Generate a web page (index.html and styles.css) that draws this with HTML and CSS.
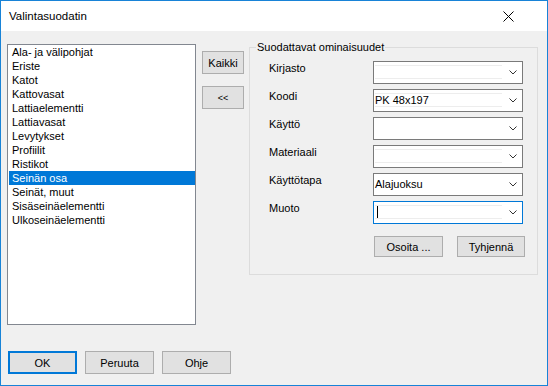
FILE: index.html
```html
<!DOCTYPE html>
<html lang="fi">
<head>
    <meta charset="UTF-8">
    <meta name="viewport" content="width=device-width, initial-scale=1.0">
    <title>Valintasuodatin</title>
    <link rel="stylesheet" href="styles.css">
</head>
<body>
    <div class="window">
        <div class="titlebar">
            <span class="title">Valintasuodatin</span>
            <span class="close">
                <svg width="11" height="11" viewBox="0 0 11 11"><path d="M0.5 0.5 L10.5 10.5 M10.5 0.5 L0.5 10.5" stroke="#000" stroke-width="1" fill="none"/></svg>
            </span>
        </div>
        <div class="client">
            <div class="main">
                <ul class="list">
                    <li>Ala- ja välipohjat</li>
                    <li>Eriste</li>
                    <li>Katot</li>
                    <li>Kattovasat</li>
                    <li>Lattiaelementti</li>
                    <li>Lattiavasat</li>
                    <li>Levytykset</li>
                    <li>Profiilit</li>
                    <li>Ristikot</li>
                    <li class="selected">Seinän osa</li>
                    <li>Seinät, muut</li>
                    <li>Sisäseinäelementti</li>
                    <li>Ulkoseinäelementti</li>
                </ul>
                <div class="side">
                    <button class="btn">Kaikki</button>
                    <button class="btn back">&lt;&lt;</button>
                </div>
                <fieldset class="group">
                    <legend>Suodattavat ominaisuudet</legend>
                    <div class="fields">
                        <div class="row">
                            <label>Kirjasto</label>
                            <div class="combo"><span class="field lined"></span><span class="arrow"><svg width="8" height="5" viewBox="0 0 8 5"><polyline points="0.5,0.5 4,4 7.5,0.5" fill="none" stroke="#333" stroke-width="1"/></svg></span></div>
                        </div>
                        <div class="row">
                            <label>Koodi</label>
                            <div class="combo"><span class="field lined">PK 48x197</span><span class="arrow"><svg width="8" height="5" viewBox="0 0 8 5"><polyline points="0.5,0.5 4,4 7.5,0.5" fill="none" stroke="#333" stroke-width="1"/></svg></span></div>
                        </div>
                        <div class="row">
                            <label>Käyttö</label>
                            <div class="combo"><span class="field"></span><span class="arrow"><svg width="8" height="5" viewBox="0 0 8 5"><polyline points="0.5,0.5 4,4 7.5,0.5" fill="none" stroke="#333" stroke-width="1"/></svg></span></div>
                        </div>
                        <div class="row">
                            <label>Materiaali</label>
                            <div class="combo"><span class="field lined"></span><span class="arrow"><svg width="8" height="5" viewBox="0 0 8 5"><polyline points="0.5,0.5 4,4 7.5,0.5" fill="none" stroke="#333" stroke-width="1"/></svg></span></div>
                        </div>
                        <div class="row">
                            <label>Käyttötapa</label>
                            <div class="combo"><span class="field">Alajuoksu</span><span class="arrow"><svg width="8" height="5" viewBox="0 0 8 5"><polyline points="0.5,0.5 4,4 7.5,0.5" fill="none" stroke="#333" stroke-width="1"/></svg></span></div>
                        </div>
                        <div class="row">
                            <label>Muoto</label>
                            <div class="combo focused"><span class="field lined"><span class="caret"></span></span><span class="arrow"><svg width="8" height="5" viewBox="0 0 8 5"><polyline points="0.5,0.5 4,4 7.5,0.5" fill="none" stroke="#333" stroke-width="1"/></svg></span></div>
                        </div>
                        <div class="actions">
                            <button class="btn small">Osoita ...</button>
                            <button class="btn small">Tyhjennä</button>
                        </div>
                    </div>
                </fieldset>
            </div>
            <div class="footer">
                <button class="btn wide default">OK</button>
                <button class="btn wide">Peruuta</button>
                <button class="btn wide">Ohje</button>
            </div>
        </div>
    </div>
</body>
</html>
```

FILE: styles.css
```css
* {
    box-sizing: border-box;
}
body {
    margin: 0;
    font-family: 'Liberation Sans', Arial, sans-serif;
    font-size: 11px;
    color: #000;
}
.window {
    width: 548px;
    height: 386px;
    border: 1px solid #1883d7; /* accent border */
    background-color: #f0f0f0;
    display: flex;
    flex-direction: column;
}
.titlebar {
    height: 30px;
    background-color: #fff;
    display: flex;
    align-items: center;
    justify-content: space-between;
    padding-left: 8px;
    font-size: 11.5px;
}
.close {
    display: flex;
    padding-right: 33px;
}
.client {
    flex: 1;
    display: flex;
    flex-direction: column;
    padding: 13px 0 0 6px;
}
.main {
    display: flex;
    align-items: flex-start;
}
.list {
    width: 189px;
    height: 281px;
    margin: 0;
    padding: 0 0 0 1px;
    list-style: none;
    background-color: #fff;
    border: 1px solid #828790;
}
.list li {
    height: 14px;
    line-height: 14px;
    padding-left: 3px;
    white-space: nowrap;
}
.list li.selected {
    background-color: #0078d7;
    color: #fff;
}
.btn {
    font: inherit;
    color: #000;
    background-color: #e1e1e1;
    border: 1px solid #adadad;
    padding: 0;
    height: 23px;
}
.side {
    display: flex;
    flex-direction: column;
    gap: 12px;
    margin-left: 6px;
    padding-top: 7px;
}
.side .btn {
    width: 42px;
}
.side .back {
    font-size: 9px;
    padding-top: 1px;
}
.group {
    width: 289px;
    height: 234px;
    margin: -3px 0 0 5px;
    padding: 0;
    border: 1px solid #dcdcdc;
}
.group legend {
    margin-left: 6px;
    padding: 0 1px;
    line-height: 13px;
}
.fields {
    display: flex;
    flex-direction: column;
    gap: 5px;
    padding: 7px 0 0 19px;
}
.row {
    display: flex;
    height: 23px;
}
.row label {
    width: 104px;
    padding-top: 1px;
    line-height: 13px;
}
.combo {
    width: 150px;
    height: 23px;
    display: flex;
    background-color: #fff;
    border: 1px solid #7a7a7a;
}
.combo.focused {
    border-color: #0078d7;
}
.field {
    width: 127px;
    margin: 3px 0 4px 1px;
    border-top: 1px solid transparent;
    border-bottom: 1px solid transparent;
    line-height: 12px;
    white-space: nowrap;
}
.field.lined {
    border-color: #ededed;
}
.caret {
    display: inline-block;
    width: 1px;
    height: 12px;
    margin-left: 2px;
    vertical-align: top;
    background-color: #000;
}
.arrow {
    flex: 1;
    display: flex;
    align-items: center;
    justify-content: center;
    padding-left: 2px;
}
.actions {
    display: flex;
    gap: 14px;
    margin: 7px 0 0 105px;
}
.btn.small {
    width: 69px;
    height: 21px;
}
.btn.small + .btn.small {
    width: 68px;
}
.footer {
    display: flex;
    gap: 8px;
    margin-top: 26px;
    padding-left: 1px;
}
.btn.wide {
    width: 69px;
}
.btn.default {
    border: 2px solid #0078d7;
}
```
